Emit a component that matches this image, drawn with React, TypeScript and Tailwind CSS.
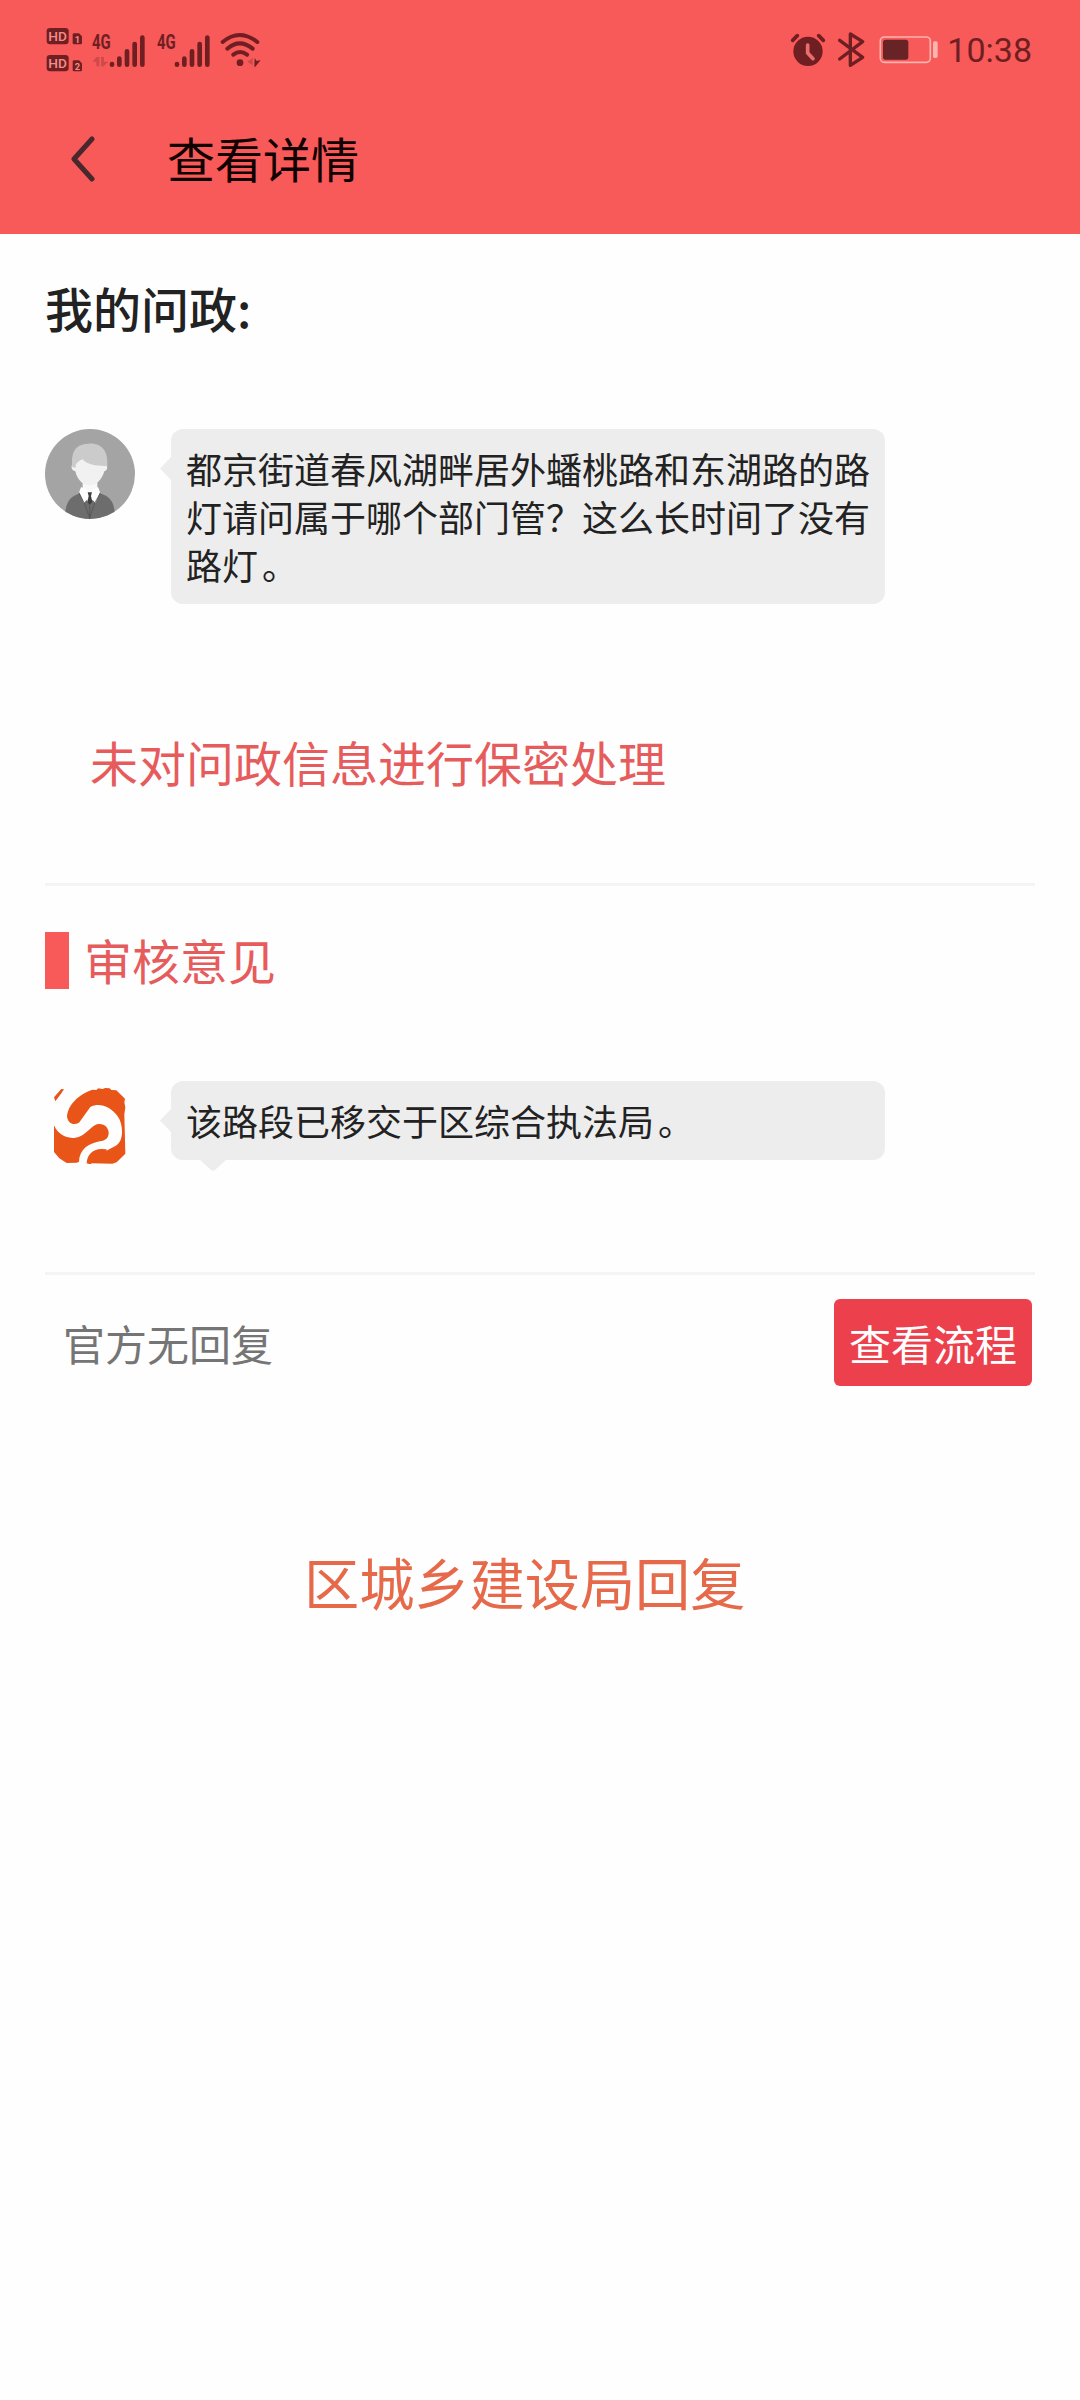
import type { ReactNode } from 'react'

const ink = '#6f1f22'

function HdBadge({ sim }: { sim: string }) {
  return (
    <svg className="block h-[18px] w-[37px] overflow-visible" viewBox="0 0 111 54">
      <rect x="2" y="0" width="66" height="49" rx="10" fill={ink} />
      <text x="7" y="38" textLength="56" lengthAdjust="spacingAndGlyphs" fontSize="40" fontWeight="500" fontFamily="Roboto, sans-serif" fill="#f58c8a">HD</text>
      <path d="M80 20a4 4 0 0 1 4-4h15l9 9v20a4 4 0 0 1-4 4H84a4 4 0 0 1-4-4z" fill={ink} />
      <text x="86" y="44" fontSize="28" fontWeight="700" fontFamily="Roboto, sans-serif" fill="#f58c8a">{sim}</text>
    </svg>
  )
}

function Signal({ data }: { data?: boolean }) {
  return (
    <svg className="h-[36px] w-[54px] overflow-visible" viewBox="0 0 162 108">
      <text x="0" y="52" textLength="56" lengthAdjust="spacingAndGlyphs" fontSize="60" fontWeight="700" fontFamily="Roboto, sans-serif" fill={ink}>4G</text>
      {data && <path d="M1 89 14 75h8v28h-9V89zM27 75h9v14h13L35 103h-8z" fill="#cf4a4b" />}
      <path d="M60 96v2M82 80v18M105 58v40M128 36v62M151 17v81" stroke={ink} strokeWidth="14" strokeLinecap="round" />
    </svg>
  )
}

function Wifi() {
  return (
    <svg className="h-[36px] w-[42px]" viewBox="0 0 126 108">
      <g fill="none" stroke={ink} strokeWidth="12" strokeLinecap="round">
        <path d="M8 30q50-42 104 0M22 50q37-32 76 0M40 68q20-16 41 0" />
      </g>
      <circle cx="60" cy="92" r="10" fill={ink} />
      <path d="M82 89 98 78v22z" fill="#cf4a4b" />
      <path d="M104 78l6 9 12-3-16 20h-3z" fill={ink} />
    </svg>
  )
}

function Alarm() {
  return (
    <svg className="h-[35px] w-[36px]" viewBox="0 0 108 105">
      <path d="M8 22 22 8M100 22 86 8" stroke={ink} strokeWidth="11" strokeLinecap="round" />
      <circle cx="54" cy="55" r="44" fill={ink} />
      <path d="M53 36v24l16 17" fill="none" stroke="#e86f6e" strokeWidth="11" strokeLinecap="round" strokeLinejoin="round" />
    </svg>
  )
}

function Bluetooth() {
  return (
    <svg className="h-[36px] w-[28px]" viewBox="0 0 84 108">
      <path d="M8 25 77 76 40 100V6l37 23L8 81" fill="none" stroke={ink} strokeWidth="10" strokeLinecap="round" strokeLinejoin="round" />
    </svg>
  )
}

function Battery() {
  return (
    <svg className="h-[28px] w-[59px]" viewBox="0 0 177 84">
      <rect x="4" y="3" width="150" height="76" rx="12" fill="none" stroke="#fbb5b0" strokeWidth="5" />
      <rect x="12" y="11" width="76" height="60" rx="8" fill="#672326" />
      <rect x="162" y="16" width="14" height="50" rx="5" fill="#fbb5b0" />
    </svg>
  )
}

function UserAvatar() {
  return (
    <svg className="size-[90px] shrink-0" viewBox="0 0 270 270">
      <defs>
        <clipPath id="face">
          <circle cx="135" cy="135" r="135" />
        </clipPath>
      </defs>
      <g clipPath="url(#face)">
        <rect width="270" height="270" fill="#a4a4a4" />
        <path d="M60 270c0-48 12-66 45-77h60c34 11 45 30 45 77z" fill="#6d6d6d" />
        <path d="M113 155h44v22l6 10-29 38-31-38 10-12z" fill="#f8f8f8" />
        <path d="M108 174l-5 16 14 32 17-20 17 20 14-32-6-16-25 14z" fill="#fff" />
        <path d="M128 190h13l-3 11 4 17-8 10-7-10 4-17z" fill="#3f3f3f" />
        <path d="M102 192l16 30 16 45 15-45 17-30M134 230v40" fill="none" stroke="#505050" strokeWidth="2" />
        <path d="M85 88h96v20c8 0 8 17-3 19-8 27-26 43-44 43s-37-16-43-43c-13-3-15-19-6-20z" fill="#f1f1f1" />
        <path d="M82 114c-4-44 7-68 48-70 37-2 60 18 57 67h-7c-28 0-55-5-67-20-10 4-18 10-21 17v8z" fill="#cbcbcb" />
      </g>
    </svg>
  )
}

function OfficeLogo() {
  return (
    <svg className="h-[78px] w-[74px]" viewBox="0 0 222 234">
      <path d="M3 34 25 9l8 1-9 13-17 23zM42 92C44 58 77 24 118 11l12 1 6-5 12 2 9-3 13 1 5 5 15 1 26 25-2 11 3 15-3 21 3 118-26 26-13 4-62-1-4 3-11-3c2-25 15-42 45-43l15 1-1 4 27-14c27-13 24-65 8-88-22-30-55-43-83-29L78 110c-18 9-32 2-36-18z" fill="#e95419" />
      <path d="M3 118c12 28 38 41 65 37 31-5 42-32 64-40 19-5 35 9 35 25 0 15-8 22-22 25-40 6-66 26-67 62l-6 3-31 1-22-14-16-19z" fill="#e95419" />
    </svg>
  )
}

function Bubble({ children, tail }: { children: ReactNode; tail?: boolean }) {
  return (
    <div className="relative w-[714px] rounded-xl bg-[#ededed] pt-[15px] pr-[14px] pb-[16px] pl-[15px] text-[36px] leading-[48px] text-[#222]">
      <svg className="absolute top-[28px] -left-[11px] h-[23px] w-[11px]" viewBox="0 0 11 23">
        <path d="M11 0v23L0 11.5z" fill="#ededed" />
      </svg>
      {tail && (
        <svg className="absolute -bottom-[11px] left-[28px] h-[12px] w-[28px]" viewBox="0 0 28 12">
          <path d="M0 0h28L16 11q-2 1.500-4 0z" fill="#ededed" />
        </svg>
      )}
      {children}
      <span className="pl-[4px]">。</span>
    </div>
  )
}

export default function App() {
  return (
    <div className="flex h-[2400px] w-[1080px] flex-col bg-[#fefefe] font-['Noto_Sans_CJK_SC',sans-serif]">
      <header className="h-[234px] bg-[#f85959]">
        <div className="flex h-[100px] items-center justify-between pr-[48px] pl-[46px]">
          <div className="flex items-center">
            <div className="mr-[9px] space-y-[9px]">
              <HdBadge sim="1" />
              <HdBadge sim="2" />
            </div>
            <Signal data />
            <div className="w-[11px]" />
            <Signal />
            <div className="w-[9px]" />
            <Wifi />
          </div>
          <div className="flex items-center">
            <Alarm />
            <div className="ml-[11px]"><Bluetooth /></div>
            <div className="ml-[14px]"><Battery /></div>
            <span className="ml-[9px] font-[Roboto] text-[34px] leading-[40px] text-[#6f1f22]">10:38</span>
          </div>
        </div>
        <div className="flex h-[118px] items-center pl-[71px]">
          <svg className="h-[46px] w-[24px]" viewBox="0 0 24 46" fill="none">
            <path d="M21 3 3 23l18 20" stroke="#48282c" strokeWidth="5" strokeLinecap="round" strokeLinejoin="round" />
          </svg>
          <h1 className="ml-[72px] pb-[4px] text-[48px] leading-[60px] text-[#100000]">查看详情</h1>
        </div>
      </header>

      <main className="px-[45px]">
        <h2 className="pt-[43px] text-[48px] leading-[60px] font-medium text-[#222]">我的问政:</h2>

        <div className="mt-[92px] flex items-start gap-[36px]">
          <UserAvatar />
          <Bubble>都京街道春风湖畔居外蟠桃路和东湖路的路灯请问属于哪个部门管？这么长时间了没有路灯</Bubble>
        </div>

        <p className="mt-[127px] pl-[45px] text-[48px] leading-[60px] text-[#e65c5c]">未对问政信息进行保密处理</p>

        <section className="mt-[92px] border-t-[3px] border-[#f4f4f4] pt-[46px]">
          <div className="flex h-[57px] items-center">
            <div className="h-full w-[24px] bg-[#f85959]" />
            <h3 className="ml-[15px] pb-[4px] text-[48px] leading-[60px] text-[#e65c5c]">审核意见</h3>
          </div>
          <div className="mt-[92px] flex items-start">
            <div className="mr-[44px] ml-[8px] pt-[5px]"><OfficeLogo /></div>
            <Bubble tail>该路段已移交于区综合执法局</Bubble>
          </div>
        </section>

        <section className="mt-[108px] border-t-[3px] border-[#f4f4f4]">
          <div className="flex items-center justify-between pt-[24px] pr-[3px] pl-[18px]">
            <span className="text-[42px] leading-[54px] text-[#757575]">官方无回复</span>
            <button className="h-[87px] w-[198px] rounded-md bg-[#ed404d] text-[42px] leading-[54px] text-white">查看流程</button>
          </div>
        </section>

        <p className="mt-[160px] pl-[259px] text-[55.2px] leading-[70px] text-[#e6694a]">区城乡建设局回复</p>
      </main>
    </div>
  )
}
